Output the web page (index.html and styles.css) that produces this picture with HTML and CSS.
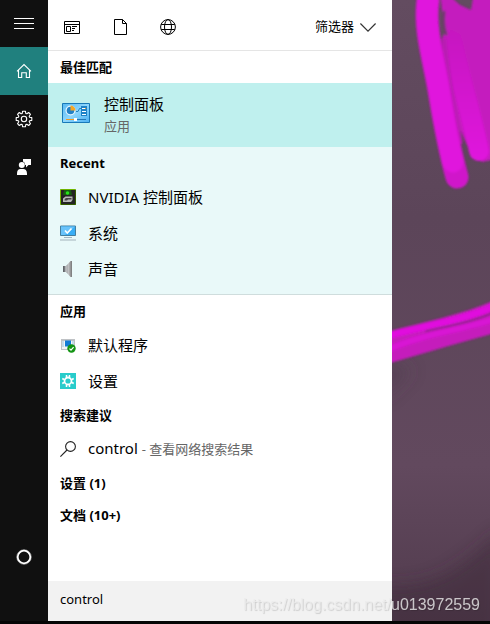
FILE: index.html
```html
<!DOCTYPE html>
<html lang="zh-CN">
<head>
  <meta charset="UTF-8" />
  <meta name="viewport" content="width=device-width, initial-scale=1.0" />
  <title>control</title>
  <link rel="stylesheet" href="styles.css">
</head>
<body>
  <div class="desktop">
    <nav class="rail">
      <button class="rail-button rail-menu" aria-label="菜单">
        <svg width="20" height="11" viewBox="0 0 20 11"><path d="M0 .5h20M0 5.5h20M0 10.5h20" stroke="#fff" /></svg>
      </button>
      <button class="rail-button active" aria-label="主页">
        <svg width="16" height="16" viewBox="0 0 16 16" fill="none" stroke="#fff" stroke-width="1.1"><path d="M1 8.4L8 1.5l7 6.9M2.5 7.2v7.3h3.2V9.7h4.6v4.8h3.2V7.2" /></svg>
      </button>
      <button class="rail-button" aria-label="设置">
        <svg width="18" height="18" viewBox="0 0 18 18" fill="none" stroke="#fff" stroke-width="1.1" stroke-linejoin="round">
          <path d="M7.6 1.2h2.8l.4 2.2 1 .4 1.9-1.3 1.8 1.8-1.3 1.9.4 1 2.2.4v2.8l-2.2.4-.4 1 1.3 1.9-1.8 1.8-1.9-1.3-1 .4-.4 2.2H7.6l-.4-2.2-1-.4-1.900 1.300-1.800-1.800 1.300-1.900-.4-1-2.200-.4V7.600l2.200-.4.4-1-1.300-1.900 1.800-1.800 1.900 1.300 1-.4z" />
          <circle cx="9" cy="9" r="2.7" />
        </svg>
      </button>
      <button class="rail-button" aria-label="反馈">
        <svg width="16" height="16" viewBox="0 0 16 16" fill="#fff"><path d="M7 0h8v6h-2.500L10 8.500V6H9.200A3.800 3.800 0 0 0 7 2.600z" /><circle cx="5.800" cy="6" r="3" /><path d="M1 16v-1.800C1 11.500 2.600 10 4.300 10h3C9.200 10 11 11.500 11 14.200V16z" /></svg>
      </button>
      <button class="rail-button rail-cortana" aria-label="Cortana">
        <svg width="16" height="16" viewBox="0 0 16 16" fill="none"><circle cx="8" cy="8" r="7.300" stroke="#777" /><circle cx="8" cy="8" r="6.300" stroke="#fff" stroke-width="1.800" /></svg>
      </button>
    </nav>

    <main class="panel">
      <header class="toolbar">
        <button class="scope" aria-label="应用">
          <svg width="16" height="13" viewBox="0 0 16 13" fill="none" stroke="#000"><path d="M.5.5h15v12H.5zM.5 3.500h15M2.500 5.500h4v5h-4zM8 5.500h5M8 7.500h3M8 9.500h2" /></svg>
        </button>
        <button class="scope" aria-label="文档">
          <svg width="13" height="16" viewBox="0 0 13 16" fill="none" stroke="#000"><path d="M.5.5h8l4 4v11H.5zM8.500.5v4h4" /></svg>
        </button>
        <button class="scope" aria-label="网页">
          <svg width="16" height="16" viewBox="0 0 16 16" fill="none" stroke="#000"><circle cx="8" cy="8" r="7.400" /><ellipse cx="8" cy="8" rx="3.500" ry="7.400" /><path d="M1.200 5.500h13.600M1.200 10.500h13.600" /></svg>
        </button>
        <button class="filter">
          筛选器
          <svg width="16" height="9" viewBox="0 0 16 9" fill="none" stroke="#333" stroke-width="1.200"><path d="M.4.5L8 8.100 15.600.5" /></svg>
        </button>
      </header>

      <section>
        <h2 class="heading">最佳匹配</h2>
        <a class="best" href="#">
          <svg width="28" height="20" viewBox="0 0 28 20">
            <defs><linearGradient id="cp" x2="1" y2="1"><stop stop-color="#58b9f2" /><stop offset=".5" stop-color="#8ed6fc" /><stop offset="1" stop-color="#49b0f2" /></linearGradient></defs>
            <path d="M.5.5h27v19H.5z" fill="url(#cp)" stroke="#1879b8" />
            <circle cx="8.500" cy="7.500" r="5" fill="#e9f7ff" />
            <circle cx="8.500" cy="7.500" r="3.800" fill="#2382c6" />
            <path d="M8.500 7.500V2.500a5 5 0 0 1 5 5z" fill="#f5a623" />
            <path d="M14 8.500h2l1.500-3H20" fill="none" stroke="#2482bd" />
            <path d="M19 3h6v10h-6z" fill="#1d82c7" />
            <path d="M20 5.500h3M20 8.500h4M20 11.500h4" stroke="#fff" />
            <path d="M23 5.500h1" stroke="#f5a623" />
            <path d="M4 16.500h9" stroke="#f09a20" /><path d="M14 16.500h10" stroke="#2277b6" />
            <path d="M12 15h3v3h-3z" fill="#fff" />
          </svg>
          <span class="best-text">
            <span class="best-name">控制面板</span>
            <span class="note">应用</span>
          </span>
        </a>
      </section>

      <section class="recent">
        <h2 class="heading">Recent</h2>
        <a class="result" href="#">
          <svg width="16" height="16" viewBox="0 0 16 16"><path d="M.5.5h15v15H.5z" fill="#242424" stroke="#6fb500" /><path d="M15.500 1v14.500H1" fill="none" stroke="#355c00" /><path d="M4 1h7l1 5H3z" fill="#185b10" /><circle cx="7.500" cy="4" r="1.800" fill="#27e31c" /><path d="M3 13V9.500L5.500 7.500h7V11L11 13z" fill="#b9b9b9" /><path d="M4.500 11.500c0-2 1-2.500 3-2.500h4v1.500H8l-1 1z" fill="#444" /></svg>
          <span>NVIDIA 控制面板</span>
        </a>
        <a class="result" href="#">
          <svg width="16" height="16" viewBox="0 0 16 16"><path d="M.5 1h15v9.500H.5z" fill="#39aef6" stroke="#457f9f" /><path d="M1 1.500h14L5 10H1z" fill="#69c3fa" /><path d="M5 5.500L7.300 8l4.200-4.500" fill="none" stroke="#fff" stroke-width="1.600" /><path d="M4 12.500h8" stroke="#a5b6c2" /><path d="M0 15h16" stroke="#a4b3bc" /></svg>
          <span>系统</span>
        </a>
        <a class="result" href="#">
          <svg width="16" height="16" viewBox="0 0 16 16"><defs><linearGradient id="spk"><stop stop-color="#575b60" /><stop offset=".6" stop-color="#c2c3c5" /><stop offset="1" stop-color="#777" /></linearGradient></defs><path d="M3 5h3l4.500-5H12v16h-1.500L6 11H3z" fill="url(#spk)" /><path d="M6 5v6" stroke="#eee" stroke-width=".7" /></svg>
          <span>声音</span>
        </a>
      </section>

      <section>
        <h2 class="heading">应用</h2>
        <a class="result" href="#">
          <svg width="16" height="16" viewBox="0 0 16 16"><path d="M1 2h14v11H1z" fill="#bfc2c5" /><path d="M2 4h12v8H2z" fill="#f1f4f6" /><path d="M5 3.500h6v6H5z" fill="#117bd5" /><path d="M2.500 5h1M2.500 7h1M2.500 9h1M12.500 5h1M12.500 7h1" stroke="#4291c8" /><circle cx="11.500" cy="11.500" r="4.200" fill="#149414" /><path d="M9.500 11.600l1.500 1.500 2.600-3" fill="none" stroke="#fff" stroke-width="1.200" /></svg>
          <span>默认程序</span>
        </a>
        <a class="result" href="#">
          <svg width="16" height="16" viewBox="0 0 16 16"><path d="M0 0h16v16H0z" fill="#28cccb" /><circle cx="8" cy="8" r="3.500" fill="none" stroke="#fff" stroke-width="1.800" /><path d="M6.500 4V2M9.500 4V2M6.500 12v2M9.500 12v2M4 6.500l-1.700-1M4 9.500l-1.700 1M12 6.500l1.700-1M12 9.500l1.700 1" stroke="#fff" stroke-width="1.500" /></svg>
          <span>设置</span>
        </a>
      </section>

      <section>
        <h2 class="heading">搜索建议</h2>
        <a class="result" href="#">
          <svg width="16" height="16" viewBox="0 0 16 16" fill="none" stroke="#222" stroke-width="1.100"><circle cx="10.500" cy="5.500" r="4.900" /><path d="M7 9L.4 15.600" /></svg>
          <span>control <span class="note">- 查看网络搜索结果</span></span>
        </a>
        <h2 class="heading">设置 (1)</h2>
        <h2 class="heading">文档 (10+)</h2>
      </section>

      <input class="search" type="text" value="control" aria-label="搜索" />
    </main>

    <div class="wallpaper">
      <svg class="strokes" viewBox="0 0 98 621" preserveAspectRatio="xMinYMin slice">
        <defs>
          <filter id="soft" x="-20%" y="-20%" width="140%" height="140%"><feGaussianBlur stdDeviation="1" /></filter>
          <filter id="haze" x="-50%" y="-50%" width="200%" height="200%"><feGaussianBlur stdDeviation="8" /></filter>
          <linearGradient id="second" gradientUnits="userSpaceOnUse" x1="0" y1="20" x2="0" y2="160"><stop stop-color="#c41abe" /><stop offset="1" stop-color="#e012dd" /></linearGradient>
        </defs>
        <g filter="url(#haze)">
          <path d="M-10 360L20 370-10 400z" fill="#503d4e" opacity=".5" />
          <path d="M-10 585C50 590 75 560 110 530V640H-10z" fill="#402b3b" opacity=".6" />
        </g>
        <g filter="url(#soft)" fill="none" stroke-linecap="round">
          <path d="M48-8L60-2 68 5 79 10 82-8H110V158L90 162 75 145 55 100 54 40 50 10z" fill="#c41abe" />
          <path d="M60 40C67 75 78 108 87 151" stroke="url(#second)" stroke-width="20" />
          <path d="M68 142C62 110 56 80 52 40" stroke="#b91cb3" stroke-width="5" />
          <path d="M36 0C32 30 42 60 47 90S56 145 65 177" stroke="#d016ca" stroke-width="23" />
          <path d="M36 0C32 30 42 60 47 90S54 135 61 162" stroke="#e012dd" stroke-width="21" />
          <path d="M52 12C51 22 52 29 54 34" stroke="#713b6e" stroke-width="3" />
          <path d="M-5 332C30 322 70 315 103 300V333L60 345-5 364z" fill="#c51abc" />
          <path d="M-5 336C30 326 70 321 103 306" stroke="#e011de" stroke-width="7" />
          <path d="M-5 350C30 334 70 330 103 319" stroke="#d815d4" stroke-width="6" />
          <path d="M34 331C60 325 80 322 103 312" stroke="#792777" stroke-width="1.500" />
        </g>
      </svg>
    </div>

    <div class="watermark">https://blog.csdn.net/u013972559</div>
  </div>
</body>
</html>
```

FILE: styles.css
```css
* {
  box-sizing: border-box;
}

body {
  margin: 0;
  font-family: "Noto Sans", "Noto Sans CJK SC", sans-serif;
  font-size: 15px;
  color: #000;
  background: #050505;
}

button {
  padding: 0;
  border: none;
  background: none;
  font: inherit;
  color: inherit;
  cursor: pointer;
}

svg {
  display: block;
  flex: none;
}

.desktop {
  position: relative;
  display: grid;
  grid-template-columns: 48px 344px 1fr;
  min-height: 100vh;
  border-bottom: 3px solid #050505;
}

/* left rail */
.rail {
  display: flex;
  flex-direction: column;
  padding-bottom: 40px;
  background: #101010;
}

.rail-button {
  display: flex;
  align-items: center;
  justify-content: center;
  height: 48px;
}

.rail-menu {
  height: 47px;
}

.rail-button.active {
  background: #20807e;
}

.rail-cortana {
  margin-top: auto;
}

/* search results */
.panel {
  display: flex;
  flex-direction: column;
  background: #fff;
}

.toolbar {
  display: flex;
  height: 51px;
  border-bottom: 1px solid #e5e5e5;
}

.scope {
  display: flex;
  align-items: center;
  justify-content: center;
  width: 48px;
  padding-top: 4px;
}

.filter {
  display: flex;
  align-items: center;
  gap: 6px;
  margin-left: auto;
  padding-right: 16px;
  font-size: 13px;
}

.filter svg {
  margin-top: 4px;
}

.heading {
  margin: 0;
  padding-left: 12px;
  font-size: 13px;
  font-weight: 700;
  line-height: 32px;
}

.best {
  display: flex;
  align-items: center;
  gap: 14px;
  height: 64px;
  padding: 0 14px;
  color: inherit;
  text-decoration: none;
  background: #bff0ee;
}

.best svg {
  margin-bottom: 4px;
}

.best-text {
  display: flex;
  flex-direction: column;
  line-height: 22px;
}

.note {
  font-size: 13px;
  color: #666;
}

.recent {
  padding-bottom: 7px;
  background: #e9f9f9;
  border-bottom: 1px solid #cfdddd;
}

.result {
  display: flex;
  align-items: center;
  gap: 12px;
  height: 36px;
  padding: 0 12px;
  color: inherit;
  line-height: 20px;
  text-decoration: none;
}

.result span {
  padding-bottom: 1px;
}

.search {
  width: 100%;
  height: 40px;
  margin-top: auto;
  padding: 0 12px 4px;
  border: none;
  outline: none;
  background: #f2f2f2;
  font: inherit;
  font-size: 13px;
}

/* desktop behind the panel */
.wallpaper {
  overflow: hidden;
  background: linear-gradient(#634c60, #5c4559 35%, #62495e 75%, #513b4d);
}

.strokes {
  width: 100%;
  height: 100%;
}

.watermark {
  position: absolute;
  right: 10px;
  bottom: 6px;
  font-family: "Liberation Sans", sans-serif;
  font-size: 16px;
  line-height: 20px;
  color: rgba(235, 235, 235, 0.8);
  text-shadow: 1px 1px 1px rgba(0, 0, 0, 0.15);
}
```
